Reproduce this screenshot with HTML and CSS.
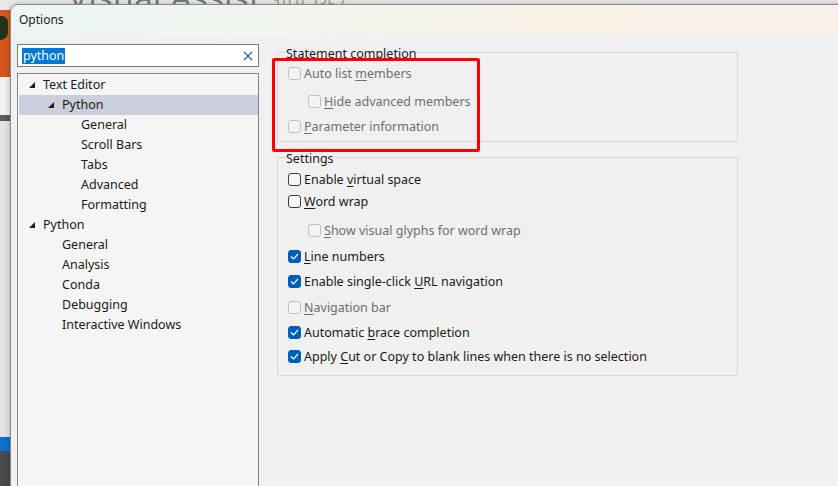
FILE: index.html
```html
<!DOCTYPE html>
<html>
<head>
<meta charset="utf-8">
<link rel="stylesheet" href="styles.css">
</head>
<body>
<div class="desktop">
  <div class="bg-head"><span class="bg-name">Visual Assist</span><span class="bg-ver">10.9.2357</span></div>
  <div class="bg-strip">
    <div class="s-grey"></div>
    <div class="s-orange"><div class="s-leaf"></div></div>
    <div class="s-light"></div>
    <div class="s-dark"></div>
    <div class="s-pale"></div>
    <div class="s-blue"></div>
    <div class="s-bottom"></div>
  </div>

  <div class="dialog">
    <div class="titlebar">Options</div>
    <div class="content">
      <div class="left">
        <div class="search">
          <span class="sel">python</span>
          <svg class="clear" width="10" height="10" viewBox="0 0 10 10"><path d="M1 1 L9 9 M9 1 L1 9" stroke="#2a66b0" stroke-width="1.3" fill="none"/></svg>
        </div>
        <div class="tree">
          <div class="node l0"><svg class="tri" width="6" height="6" viewBox="0 0 6 6"><polygon points="6,0 6,6 0,6" fill="#1e1e1e"/></svg>Text Editor</div>
          <div class="node l1 selected"><svg class="tri" width="6" height="6" viewBox="0 0 6 6"><polygon points="6,0 6,6 0,6" fill="#1e1e1e"/></svg>Python</div>
          <div class="node l2">General</div>
          <div class="node l2">Scroll Bars</div>
          <div class="node l2">Tabs</div>
          <div class="node l2">Advanced</div>
          <div class="node l2">Formatting</div>
          <div class="node l0"><svg class="tri" width="6" height="6" viewBox="0 0 6 6"><polygon points="6,0 6,6 0,6" fill="#1e1e1e"/></svg>Python</div>
          <div class="node l1">General</div>
          <div class="node l1">Analysis</div>
          <div class="node l1">Conda</div>
          <div class="node l1">Debugging</div>
          <div class="node l1">Interactive Windows</div>
        </div>
      </div>

      <div class="right">
        <fieldset class="group g1">
          <legend>Statement completion</legend>
          <div class="opts">
            <div class="opt disabled mt1"><span class="box"></span><span>Auto list <u>m</u>embers</span></div>
            <div class="opt disabled sub mt8"><span class="box"></span><span><u>H</u>ide advanced members</span></div>
            <div class="opt disabled mt5"><span class="box"></span><span><u>P</u>arameter information</span></div>
          </div>
        </fieldset>
        <fieldset class="group g2">
          <legend>Settings</legend>
          <div class="opts">
            <div class="opt mt2"><span class="box"></span><span>Enable <u>v</u>irtual space</span></div>
            <div class="opt mt2"><span class="box"></span><span><u>W</u>ord wrap</span></div>
            <div class="opt disabled sub mt9"><span class="box"></span><span><u>S</u>how visual glyphs for word wrap</span></div>
            <div class="opt checked mt6"><span class="box"><svg width="9" height="7" viewBox="0 0 9 7"><path d="M1 3.5 L3.5 6 L8 1" stroke="#fff" stroke-width="1.2" fill="none"/></svg></span><span><u>L</u>ine numbers</span></div>
            <div class="opt checked mt5"><span class="box"><svg width="9" height="7" viewBox="0 0 9 7"><path d="M1 3.5 L3.5 6 L8 1" stroke="#fff" stroke-width="1.2" fill="none"/></svg></span><span>Enable single-click <u>U</u>RL navigation</span></div>
            <div class="opt disabled mt6"><span class="box"></span><span><u>N</u>avigation bar</span></div>
            <div class="opt checked mt5"><span class="box"><svg width="9" height="7" viewBox="0 0 9 7"><path d="M1 3.5 L3.5 6 L8 1" stroke="#fff" stroke-width="1.2" fill="none"/></svg></span><span>Automatic <u>b</u>race completion</span></div>
            <div class="opt checked mt4"><span class="box"><svg width="9" height="7" viewBox="0 0 9 7"><path d="M1 3.5 L3.5 6 L8 1" stroke="#fff" stroke-width="1.2" fill="none"/></svg></span><span>Apply <u>C</u>ut or Copy to blank lines when there is no selection</span></div>
          </div>
        </fieldset>
        <div class="annot"></div>
      </div>
    </div>
  </div>
</div>
</body>
</html>
```
FILE: styles.css
```css
* { box-sizing: border-box; }
html, body { margin: 0; padding: 0; }
body {
  font-family: "Noto Sans", "Noto Sans CJK SC", sans-serif;
  font-size: 12.5px;
  color: #000;
  background: #e9e9e9;
}
.desktop {
  position: relative;
  width: 838px;
  height: 486px;
  overflow: hidden;
  background: #ebebeb;
}
.bg-head {
  position: absolute;
  left: 68px;
  top: -26px;
  display: flex;
  align-items: baseline;
  gap: 12px;
  color: #7b7b7b;
  white-space: nowrap;
}
.bg-name { font-size: 34px; font-family: "Open Sans", sans-serif; }
.bg-ver { font-size: 16px; color: #9a9a9a; }
.bg-strip {
  position: absolute;
  left: 0;
  top: 0;
  width: 11px;
  height: 486px;
  display: flex;
  flex-direction: column;
}
.s-grey { height: 10px; background: #e8e8e8; }
.s-orange { height: 67px; background: #d4581f; position: relative; }
.s-leaf { width: 8px; height: 24px; margin-top: 6px; background: #20341c; border-radius: 0 6px 8px 0; }
.s-light { height: 38px; background: #f1f1f1; }
.s-dark { height: 6px; background: #5c5c5c; }
.s-pale { flex: 1; background: #e4e4e4; }
.s-blue { height: 14px; background: #0a72cc; }
.s-bottom { height: 35px; background: #4b4b4b; }

.dialog {
  position: absolute;
  left: 10px;
  top: 4px;
  width: 840px;
  height: 500px;
  border: 1px solid #8a8a8a;
  border-radius: 8px 8px 0 0;
  background: #f0f0f0;
  box-shadow: 0 0 6px rgba(0,0,0,0.25);
  display: flex;
  flex-direction: column;
  overflow: hidden;
}
.titlebar {
  height: 30px;
  flex: none;
  display: flex;
  align-items: center;
  padding-left: 8px;
  padding-bottom: 2px;
  font-size: 12px;
  background: linear-gradient(90deg, #edf6f2 0%, #f1f5ee 35%, #f8f1e5 65%, #f9f0ea 100%);
  color: #1a1a1a;
}
.content {
  flex: 1;
  display: flex;
  gap: 18px;
  padding: 9px 0 0 6px;
}
.left {
  width: 242px;
  flex: none;
  display: flex;
  flex-direction: column;
  gap: 6px;
}
.search {
  height: 23px;
  border: 1px solid #7a7a7a;
  background: #fff;
  display: flex;
  align-items: center;
  justify-content: space-between;
  padding: 0 4px 0 4px;
  font-size: 12.5px;
}
.sel {
  background: #0078d7;
  color: #fff;
  padding: 0 1px;
  line-height: 16px;
}
.clear { margin-right: 1px; }
.tree {
  flex: 1;
  border: 1px solid #828790;
  background: #f5f5f5;
  padding: 0 0 0 1px;
}
.node {
  height: 20px;
  display: flex;
  align-items: center;
  white-space: nowrap;
  color: #1a1a1a;
  padding-bottom: 1px;
}
.node:first-child { margin-top: 1px; }
.node.selected { background: #cccedb; }
.l0 { padding-left: 24px; }
.l1 { padding-left: 43px; }
.l2 { padding-left: 62px; }
.tri { margin-left: -14px; margin-right: 8px; flex: none; }

.right {
  position: relative;
  width: 461px;
  flex: none;
  display: flex;
  flex-direction: column;
  gap: 5px;
  margin-top: -2px;
}
.group {
  margin: 0;
  padding: 0 8px 0 8px;
  border: 1px solid #d9d9d9;
  min-width: 0;
}
.group legend {
  padding: 4px 0 0 0;
  line-height: 16px;
  color: #1a1a1a;
}
.g1 { padding-bottom: 5px; }
.g2 { padding-bottom: 9px; }
.opts { padding-left: 2px; display: flex; flex-direction: column; }
.opt {
  height: 20px;
  display: flex;
  align-items: center;
  gap: 3px;
  white-space: nowrap;
  color: #1a1a1a;
}
.opt u { text-underline-offset: 2px; }
.opt.sub { padding-left: 20px; }
.mt1 { margin-top: 1px; }
.mt2 { margin-top: 2px; }
.mt4 { margin-top: 4px; }
.mt5 { margin-top: 5px; }
.mt6 { margin-top: 6px; }
.mt8 { margin-top: 8px; }
.mt9 { margin-top: 9px; }
.box {
  width: 13px;
  height: 13px;
  flex: none;
  border: 1px solid #3c3c3c;
  border-radius: 3px;
  background: #f7f7f7;
  display: flex;
  align-items: center;
  justify-content: center;
}
.opt.disabled { color: #6e6e6e; }
.opt.disabled .box { border-color: #c2c2c2; background: #f3f3f3; }
.opt.checked .box { background: #005fb8; border-color: #005fb8; }

.annot {
  position: absolute;
  left: -5px;
  top: 16px;
  width: 208px;
  height: 94px;
  border: 3px solid #f00;
  border-radius: 2px;
}
```
